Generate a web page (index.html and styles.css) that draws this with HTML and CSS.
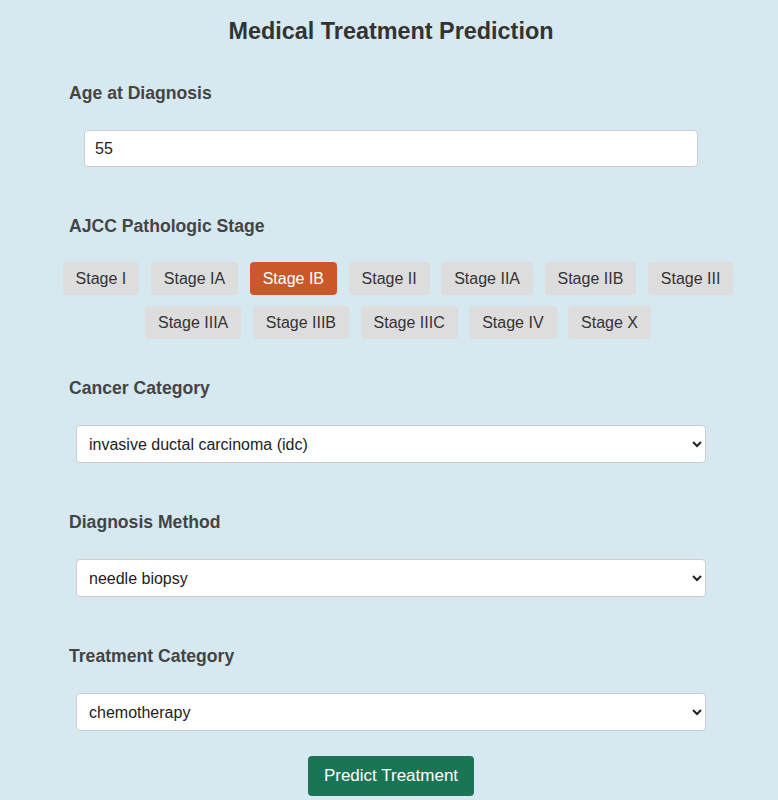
FILE: index.html
```html
<!DOCTYPE html>
<html lang="en">
<head>
    <meta charset="UTF-8">
    <meta name="viewport" content="width=device-width, initial-scale=1.0">
    <link rel="stylesheet" href="styles.css">
    <title>Medical Treatment Prediction</title>
</head>
<body>
    <h1>Medical Treatment Prediction</h1>
    <form class="container" id="predict-form">
        <div class="form-group">
            <label for="age">Age at Diagnosis</label>
            <input type="number" id="age" class="field-input" value="55">
        </div>

        <div class="form-group stage-group">
            <label>AJCC Pathologic Stage</label>
            <div class="stage-options">
                <button type="button" class="stage-btn">Stage I</button>
                <button type="button" class="stage-btn">Stage IA</button>
                <button type="button" class="stage-btn active">Stage IB</button>
                <button type="button" class="stage-btn">Stage II</button>
                <button type="button" class="stage-btn">Stage IIA</button>
                <button type="button" class="stage-btn">Stage IIB</button>
                <button type="button" class="stage-btn">Stage III</button>
                <button type="button" class="stage-btn">Stage IIIA</button>
                <button type="button" class="stage-btn">Stage IIIB</button>
                <button type="button" class="stage-btn">Stage IIIC</button>
                <button type="button" class="stage-btn">Stage IV</button>
                <button type="button" class="stage-btn">Stage X</button>
            </div>
        </div>

        <div class="form-group">
            <label for="cancer">Cancer Category</label>
            <select id="cancer" class="field-select">
                <option>invasive ductal carcinoma (idc)</option>
                <option>invasive lobular carcinoma (ilc)</option>
                <option>ductal carcinoma in situ (dcis)</option>
                <option>other</option>
            </select>
        </div>

        <div class="form-group">
            <label for="method">Diagnosis Method</label>
            <select id="method" class="field-select">
                <option>needle biopsy</option>
                <option>excisional biopsy</option>
                <option>imaging</option>
            </select>
        </div>

        <div class="form-group last-group">
            <label for="treatment">Treatment Category</label>
            <select id="treatment" class="field-select">
                <option>chemotherapy</option>
                <option>radiation therapy</option>
                <option>hormone therapy</option>
                <option>surgery</option>
            </select>
        </div>

        <div class="actions">
            <button type="submit" class="predict-btn">Predict Treatment</button>
        </div>
    </form>
    <script>
        const stageButtons = document.querySelectorAll(".stage-btn");

        stageButtons.forEach(button => {
            button.addEventListener("click", () => {
                stageButtons.forEach(b => b.classList.remove("active"));
                button.classList.add("active");
            });
        });

        document.getElementById("predict-form").addEventListener("submit", e => {
            e.preventDefault();
        });
    </script>
</body>
</html>
```

FILE: styles.css
```css
body {
    font-family: "Liberation Sans", Arial, sans-serif;
    margin: 0;
    padding: 0 0 0 4px;
    background-color: #d6e9f1;
    color: #333;
}

h1 {
    font-size: 23.4px;
    line-height: 28px;
    margin: 17px 0 0;
    text-align: center;
    color: #333;
}

.container {
    width: 644px;
    margin: 38px auto 0;
}

.form-group {
    margin-bottom: 49px;
}

.form-group label {
    display: block;
    font-size: 17.6px;
    line-height: 21px;
    font-weight: bold;
    color: #444;
    margin-bottom: 26px;
}

.field-input {
    display: block;
    box-sizing: border-box;
    width: 614px;
    height: 37px;
    margin: 0 auto;
    padding: 0 10px;
    font-family: inherit;
    font-size: 16px;
    color: #222;
    background-color: white;
    border: 1px solid #ccc;
    border-radius: 4px;
}

.field-select {
    display: block;
    box-sizing: border-box;
    width: 630px;
    height: 38px;
    margin: 0 auto;
    padding: 0 8px;
    font-family: inherit;
    font-size: 16px;
    color: #222;
    background-color: white;
    border: 1px solid #ccc;
    border-radius: 4px;
}

.stage-group {
    margin-bottom: 39px;
}

.stage-group label {
    margin-bottom: 25px;
}

.stage-options {
    display: flex;
    flex-wrap: wrap;
    justify-content: center;
    gap: 11px 11.5px;
    margin: 0 -30px 0 -16px;
}

.stage-btn {
    padding: 7px 13px;
    font-family: inherit;
    font-size: 16px;
    line-height: 19px;
    color: #333;
    background-color: #dddddd;
    border: none;
    border-radius: 4px;
    cursor: pointer;
}

.stage-btn:hover {
    background-color: #d0d0d0;
}

.stage-btn.active {
    background-color: #c9592a;
    color: white;
}

.last-group {
    margin-bottom: 25px;
}

.actions {
    text-align: center;
}

.predict-btn {
    padding: 10px 16px;
    font-family: inherit;
    font-size: 17px;
    line-height: 20px;
    color: white;
    background-color: #1b7555;
    border: none;
    border-radius: 4px;
    cursor: pointer;
}
```
